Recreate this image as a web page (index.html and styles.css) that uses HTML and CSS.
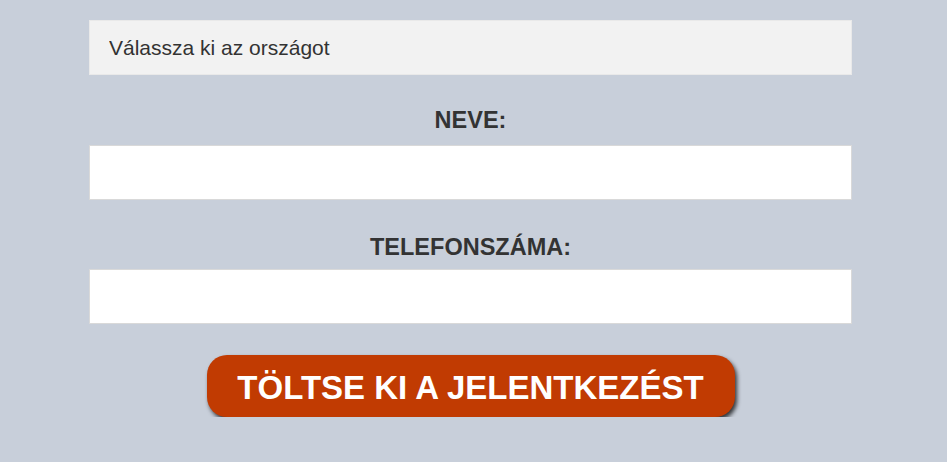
FILE: index.html
```html
<!DOCTYPE html>
<html>

<head>
    <title>Jelentkezés</title>
    <meta charset="utf-8">
    <meta name="viewport" content="width=device-width, initial-scale=1.0">
    <link rel="stylesheet" href="styles.css">
</head>

<body>
    <form class="order-form">
        <select class="country" name="country">
            <option value="">Válassza ki az országot</option>
            <option value="hu">Magyarország</option>
        </select>

        <label class="field-label" for="name">NEVE:</label>
        <input class="field" type="text" name="name" id="name">

        <label class="field-label" for="phone">TELEFONSZÁMA:</label>
        <input class="field" type="tel" name="phone" id="phone">

        <div class="actions">
            <button class="submit" type="button">TÖLTSE KI A JELENTKEZÉST</button>
        </div>
    </form>
</body>

</html>
```
FILE: styles.css
```css
body {
    margin: 0;
    background-color: #c8cfda;
    font-family: "Liberation Sans", Arial, sans-serif;
    color: #333;
}

.order-form {
    width: 763px;
    margin-left: 89px;
    padding-top: 20px;
}

.country {
    display: block;
    width: 100%;
    height: 55px;
    padding: 0 19px;
    border: 1px solid #e9e9e9;
    background-color: #f2f2f2;
    color: #333;
    font-family: inherit;
    font-size: 21px;
    appearance: none;
    -webkit-appearance: none;
    border-radius: 0;
    box-sizing: border-box;
}

.field-label {
    display: block;
    margin: 30px 0 10px;
    line-height: 30px;
    text-align: center;
    font-size: 23.5px;
    font-weight: bold;
    color: #333;
}

.field + .field-label {
    margin: 32px 0 7px;
}

.field {
    display: block;
    width: 100%;
    height: 55px;
    border: 1px solid #d9d9d9;
    background-color: #fff;
    box-sizing: border-box;
    font-family: inherit;
    font-size: 20px;
    padding: 0 19px;
}

.actions {
    display: flex;
    justify-content: center;
    padding-top: 31px;
}

.submit {
    width: 528px;
    height: 62px;
    padding: 3px 0 0;
    border: none;
    border-radius: 20px;
    background-color: #c13b02;
    color: #fff;
    font-family: inherit;
    font-size: 33px;
    font-weight: bold;
    box-shadow: 2px 3px 4px rgba(0, 0, 0, 0.75);
    cursor: pointer;
}
```
